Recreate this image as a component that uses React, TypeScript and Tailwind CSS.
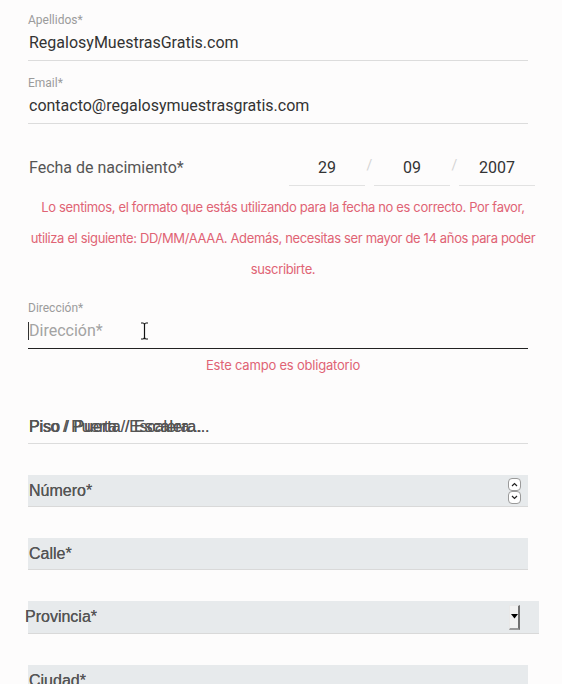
import React from "react";

const inter = "font-['Inter','Noto_Sans',sans-serif]";
const roboto = "font-['Roboto','Noto_Sans',sans-serif]";
const arial = "font-['Liberation_Sans','Arial',sans-serif]";

const TextField = ({label, value}: {label: string; value: string}) => (
    <div className={`w-[500px] ${roboto}`}>
        <div className="h-[16px] text-[12px] leading-[16px] text-[#9b9b9b]">{label}</div>
        <div className="h-[33px] flex items-center border-b border-[#dcdcdc] text-[16px] text-[#333] pb-[2px] pl-[1px]">
            {value}
        </div>
    </div>
);

const DateBox = ({value}: {value: string}) => (
    <div className="w-[76px] h-[36px] flex items-center justify-center border-b border-[#e2e2e2] text-[16px] text-[#333]">
        {value}
    </div>
);

const Slash = () => (
    <div className="w-[9px] text-center text-[14px] text-[#d4d4d4] pb-[6px]">/</div>
);

const GrayField = ({label, children}: {label: string; children?: React.ReactNode}) => (
    <div className={`w-[500px] h-[32px] bg-[#e7eaec] border-b border-[#d9d9d9] flex items-center pl-[1px] pr-[7px] ${arial}`}>
        <span className="flex-1 text-[16px] text-[#555] [text-shadow:0_0_0.4px_#555]">{label}</span>
        {children}
    </div>
);

const Spinner = () => (
    <div className="flex flex-col">
        <div className="w-[13px] h-[13px] border border-[#9a9a9a] rounded-[4px] bg-white flex items-center justify-center">
            <svg width="7" height="5" viewBox="0 0 7 5"><path d="M1 4 L3.5 1.5 L6 4" fill="none" stroke="#222" strokeWidth="1.2"/></svg>
        </div>
        <div className="w-[13px] h-[13px] border border-[#9a9a9a] rounded-[4px] bg-white flex items-center justify-center">
            <svg width="7" height="5" viewBox="0 0 7 5"><path d="M1 1 L3.5 3.5 L6 1" fill="none" stroke="#222" strokeWidth="1.2"/></svg>
        </div>
    </div>
);

const SelectArrow = () => (
    <div className="w-[11px] h-[25px] bg-[#f2f2f2] border-l border-t border-[#e8e8e8] border-r-2 border-b-2 border-r-[#707070] border-b-[#9a9a9a] flex items-center justify-center">
        <svg width="7" height="5" viewBox="0 0 7 5"><path d="M0 0 H7 L3.5 4.5 Z" fill="#000"/></svg>
    </div>
);

const App: React.FC = () => {
    return (
        <div className={`min-h-[684px] w-[562px] bg-[#fdfcfc] overflow-hidden ${roboto}`}>
            <div className="pl-[28px] pt-[12px]">
                <TextField label="Apellidos*" value="RegalosyMuestrasGratis.com" />
                <div className="mt-[14px]">
                    <TextField label="Email*" value="contacto@regalosymuestrasgratis.com" />
                </div>

                {/* fecha */}
                <div className="mt-[26px] w-[507px] flex items-center">
                    <div className="flex-1 text-[16px] text-[#555] pl-[1px]">Fecha de nacimiento*</div>
                    <DateBox value="29" />
                    <Slash />
                    <DateBox value="09" />
                    <Slash />
                    <DateBox value="2007" />
                </div>
                <div className={`mt-[6px] w-[510px] text-center text-[13px] leading-[31px] tracking-[-0.35px] text-[#e06374] whitespace-nowrap ${inter}`}>
                    <div>Lo sentimos, el formato que estás utilizando para la fecha no es correcto. Por favor,</div>
                    <div>utiliza el siguiente: DD/MM/AAAA. Además, necesitas ser mayor de 14 años para poder</div>
                    <div>suscribirte.</div>
                </div>

                {/* direccion */}
                <div className="mt-[15px] w-[500px]">
                    <div className="h-[16px] text-[12px] leading-[16px] text-[#9b9b9b]">Dirección*</div>
                    <div className="relative h-[33px] flex items-center border-b-[1.5px] border-[#222] text-[16px] text-[#a3a3a3] pb-[2px]">
                        <span className="w-px h-[18px] bg-[#333]" />
                        <span>Dirección*</span>
                        <svg className="absolute left-[112px] top-[6px]" width="9" height="18" viewBox="0 0 9 18">
                            <path d="M1 1 H3 Q4.5 1 4.5 3 V15 Q4.5 17 3 17 H1 M8 1 H6 Q4.5 1 4.5 3 M4.5 15 Q4.5 17 6 17 H8" fill="none" stroke="#fff" strokeWidth="3"/>
                            <path d="M1 1 H3 Q4.5 1 4.5 3 V15 Q4.5 17 3 17 H1 M8 1 H6 Q4.5 1 4.5 3 M4.5 15 Q4.5 17 6 17 H8" fill="none" stroke="#111" strokeWidth="1.2"/>
                        </svg>
                    </div>
                </div>
                <div className={`mt-[6px] w-[510px] text-center text-[13px] leading-[20px] tracking-[-0.2px] text-[#e06374] ${inter}`}>
                    Este campo es obligatorio
                </div>

                {/* piso */}
                <div className={`mt-[35px] w-[500px] h-[34px] flex items-center border-b border-[#dcdcdc] ${arial}`}>
                    <span className="relative text-[16px] text-[#555] pl-[1px] [text-shadow:0_0_0.4px_#555]">
                        Piso / Puerta / Escalera...
                        <span className="absolute left-[1px] top-0 whitespace-nowrap tracking-[-0.3px] text-[#555]/60">Piso / Puerta / Escalera...</span>
                    </span>
                </div>

                <div className="mt-[31px] flex flex-col gap-[31px]">
                    <GrayField label="Número*">
                        <Spinner />
                    </GrayField>
                    <GrayField label="Calle*" />
                    <div className={`w-[511px] h-[33px] bg-[#e7eaec] border-b border-[#d9d9d9] flex items-center pr-[19px] ${arial}`}>
                        <span className="flex-1 -ml-[3px] text-[16px] text-[#555] [text-shadow:0_0_0.4px_#555]">Provincia*</span>
                        <SelectArrow />
                    </div>
                    <GrayField label="Ciudad*" />
                </div>
            </div>
        </div>
    );
};

export default App;
